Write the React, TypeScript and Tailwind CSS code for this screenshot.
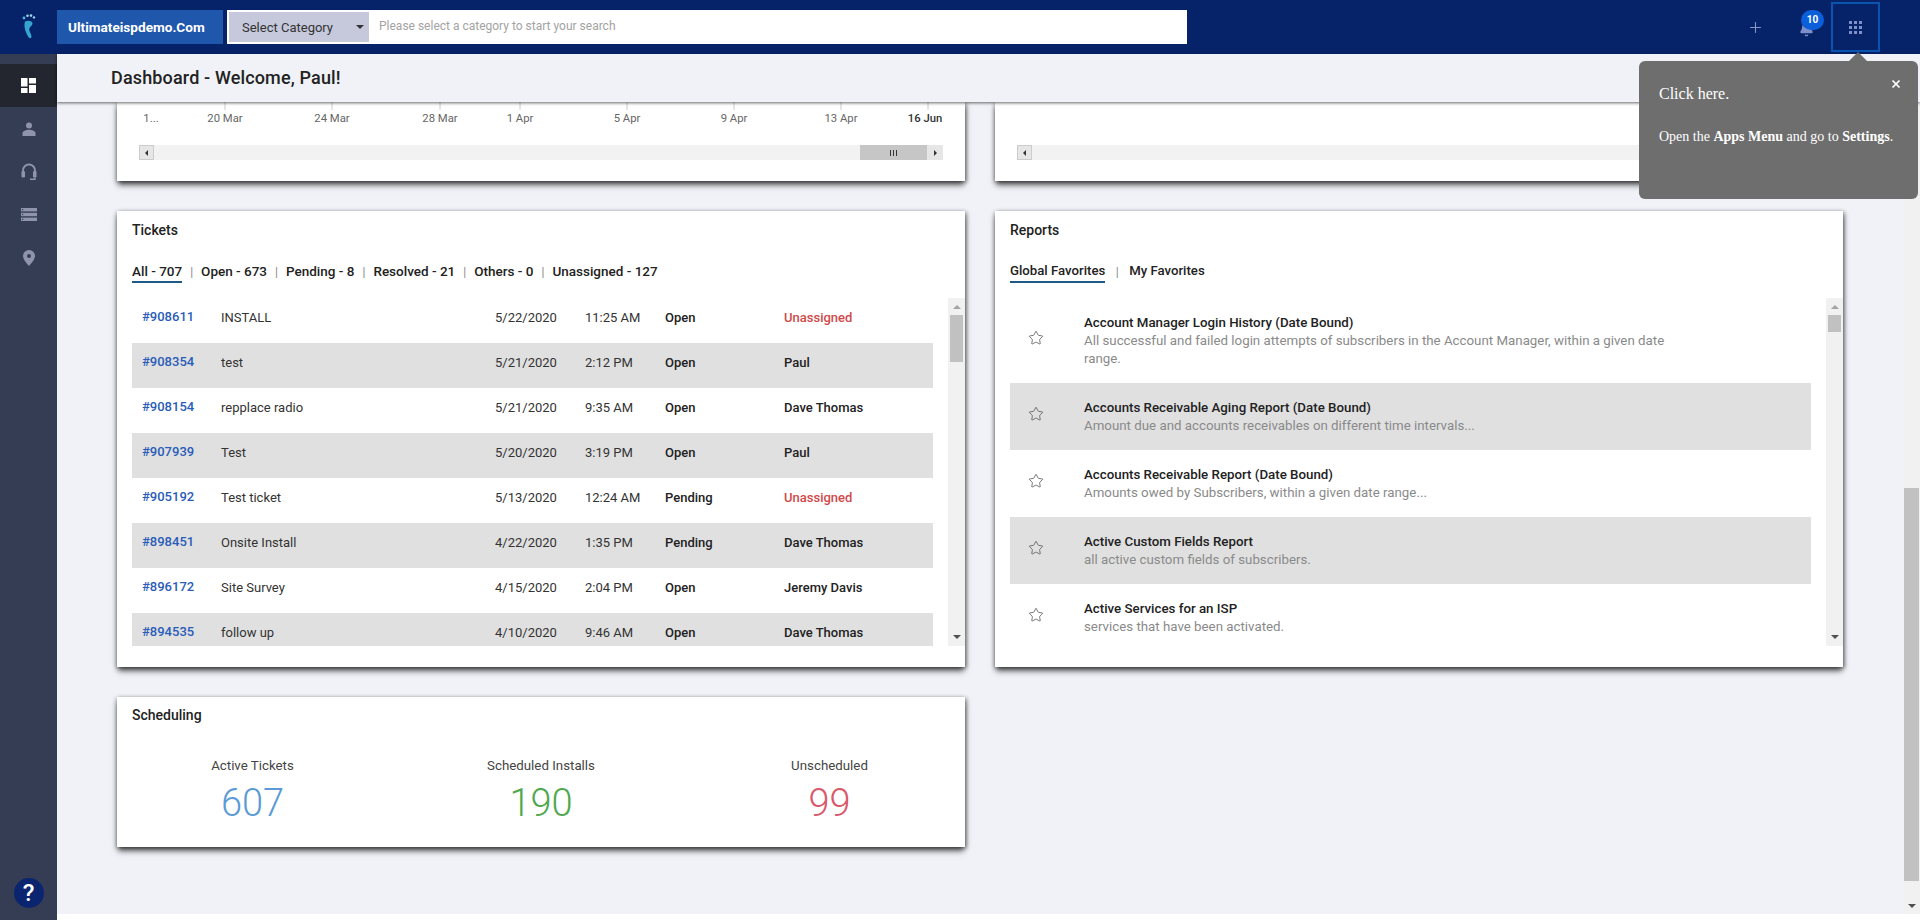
import React from "react";
import { Plus, Bell, Star, X } from "lucide-react";

const tickets = [
  { id: "#908611", subject: "INSTALL", date: "5/22/2020", time: "11:25 AM", status: "Open", owner: "Unassigned" },
  { id: "#908354", subject: "test", date: "5/21/2020", time: "2:12 PM", status: "Open", owner: "Paul" },
  { id: "#908154", subject: "repplace radio", date: "5/21/2020", time: "9:35 AM", status: "Open", owner: "Dave Thomas" },
  { id: "#907939", subject: "Test", date: "5/20/2020", time: "3:19 PM", status: "Open", owner: "Paul" },
  { id: "#905192", subject: "Test ticket", date: "5/13/2020", time: "12:24 AM", status: "Pending", owner: "Unassigned" },
  { id: "#898451", subject: "Onsite Install", date: "4/22/2020", time: "1:35 PM", status: "Pending", owner: "Dave Thomas" },
  { id: "#896172", subject: "Site Survey", date: "4/15/2020", time: "2:04 PM", status: "Open", owner: "Jeremy Davis" },
  { id: "#894535", subject: "follow up", date: "4/10/2020", time: "9:46 AM", status: "Open", owner: "Dave Thomas" },
];

const reports = [
  {
    title: "Account Manager Login History (Date Bound)",
    desc: "All successful and failed login attempts of subscribers in the Account Manager, within a given date range.",
  },
  {
    title: "Accounts Receivable Aging Report (Date Bound)",
    desc: "Amount due and accounts receivables on different time intervals...",
  },
  {
    title: "Accounts Receivable Report (Date Bound)",
    desc: "Amounts owed by Subscribers, within a given date range...",
  },
  { title: "Active Custom Fields Report", desc: "all active custom fields of subscribers." },
  { title: "Active Services for an ISP", desc: "services that have been activated." },
];

const axis = [
  { x: 34, label: "1...", tick: false },
  { x: 108, label: "20 Mar", tick: true },
  { x: 215, label: "24 Mar", tick: true },
  { x: 323, label: "28 Mar", tick: true },
  { x: 403, label: "1 Apr", tick: true },
  { x: 510, label: "5 Apr", tick: true },
  { x: 617, label: "9 Apr", tick: true },
  { x: 724, label: "13 Apr", tick: true },
];

const cardClass = "bg-white shadow-[0_5px_6px_-1px_rgba(0,0,0,0.6),-1px_1px_4px_0_rgba(0,0,0,0.25),2px_1px_4px_0_rgba(0,0,0,0.35)]";

function Logo() {
  return (
    <svg width="16" height="26" viewBox="0 0 16 26" className="shrink-0">
      <circle cx="3" cy="4" r="1.4" fill="#4fb6dc" />
      <circle cx="6.5" cy="1.8" r="1.3" fill="#9fd6ea" />
      <circle cx="10" cy="1.6" r="1.3" fill="#9fd6ea" />
      <circle cx="13" cy="3.4" r="1.2" fill="#9fd6ea" />
      <path
        d="M4 7.5c3-1.5 7.5-1 7.5 2 0 2.200-3.200 3.300-3.200 6 0 2.500 2.200 4.500 2.200 7 0 1.800-1.700 2.500-2.800 1C6 21 2 13 4 7.500Z"
        fill="#35a4d0"
      />
    </svg>
  );
}

function DashIcon() {
  return (
    <svg width="15" height="15" viewBox="0 0 15 15" fill="#fff">
      <rect x="0" y="0" width="6.500" height="8.500" />
      <rect x="8" y="0" width="7" height="5.500" />
      <rect x="8" y="7" width="7" height="8" />
      <rect x="0" y="10" width="6.500" height="5" />
    </svg>
  );
}

function UserIcon() {
  return (
    <svg width="14" height="14" viewBox="0 0 14 14" fill="#8f93ab">
      <circle cx="7" cy="3.500" r="3" />
      <path d="M0.500 14v-2.500C0.500 9 4 7.800 7 7.800s6.500 1.200 6.500 3.700V14Z" />
    </svg>
  );
}

function HeadsetIcon() {
  return (
    <svg width="16" height="18" viewBox="0 0 16 18" fill="none">
      <path d="M2 10V7.500a6 6 0 0 1 12 0V10" stroke="#8f93ab" strokeWidth="1.800" />
      <rect x="0.500" y="8" width="3.500" height="6.500" rx="1.200" fill="#8f93ab" />
      <rect x="12" y="8" width="3.500" height="6.500" rx="1.200" fill="#8f93ab" />
      <path d="M14 14.500v1.800H9" stroke="#8f93ab" strokeWidth="1.400" />
    </svg>
  );
}

function ListIcon() {
  return (
    <svg width="16" height="13" viewBox="0 0 16 13" fill="#8f93ab">
      <rect x="0" y="0" width="16" height="3.400" />
      <rect x="0" y="4.800" width="16" height="3.400" />
      <rect x="0" y="9.600" width="16" height="3.400" />
      <rect x="1" y="1" width="1.200" height="1.200" fill="#353d54" />
      <rect x="1" y="5.900" width="1.200" height="1.200" fill="#353d54" />
      <rect x="1" y="10.700" width="1.200" height="1.200" fill="#353d54" />
    </svg>
  );
}

function PinIcon() {
  return (
    <svg width="12" height="16" viewBox="0 0 12 16">
      <path d="M6 0a6 6 0 0 1 6 6c0 3.500-4 7.500-6 10C4 13.500 0 9.500 0 6a6 6 0 0 1 6-6Z" fill="#8f93ab" />
      <circle cx="6" cy="6" r="2" fill="#353d54" />
    </svg>
  );
}

function Sidebar() {
  const items = [<UserIcon />, <HeadsetIcon />, <ListIcon />, <PinIcon />];
  return (
    <aside className="w-[57px] shrink-0 bg-[#353d54] pt-[10px] flex flex-col">
      <div className="h-[43px] bg-[#24262f] flex items-center justify-center">
        <DashIcon />
      </div>
      {items.map((icon, i) => (
        <div key={i} className="h-[43px] flex items-center justify-center">
          {icon}
        </div>
      ))}
      <div className="mt-auto mb-[12px] flex justify-center">
        <div className="w-[30px] h-[30px] rounded-full bg-[#0b2470] text-white text-[24px] leading-[30px] text-center font-medium">
          ?
        </div>
      </div>
    </aside>
  );
}

function Header() {
  return (
    <header className="h-[54px] shrink-0 bg-[#06236a] flex items-center relative">
      <div className="w-[57px] flex justify-center">
        <Logo />
      </div>
      <div className="w-[166px] h-[34px] bg-[#1f57ad] text-white text-[13.6px] font-bold flex items-center pl-[11px]">
        Ultimateispdemo.Com
      </div>
      <div className="ml-[4px] w-[960px] h-[34px] bg-white flex items-center">
        <div className="ml-[2px] w-[140px] h-[30px] bg-[#c6c8dc] flex items-center justify-between pl-[13px] pr-[5px] text-[13px] text-[#333]">
          <span className="mt-px">Select Category</span>
          <span className="w-0 h-0 border-x-[4px] border-x-transparent border-t-[4px] border-t-[#333]" />
        </div>
        <span className="ml-[10px] -mt-[3px] text-[12px] text-[#a3a3a3]">Please select a category to start your search</span>
      </div>
      <div className="ml-auto flex items-center">
        <Plus size={17} strokeWidth={1.5} className="text-[#8a97c8] mr-[35px]" />
        <div className="relative w-[14px] h-[16px] mr-[18px] mt-[6px]">
          <Bell size={15} fill="#7f8fc9" className="text-[#7f8fc9]" />
          <span className="absolute -top-[12px] left-[2px] w-[23px] h-[20px] rounded-full bg-[#0b5fd8] text-white text-[10px] font-bold leading-[20px] text-center">
            10
          </span>
        </div>
        <div className="w-[49px] h-[50px] border-2 border-[#0a54b0] flex items-center justify-center mr-[40px]">
          <div className="grid grid-cols-3 gap-[2px]">
            {Array.from({ length: 9 }).map((_, i) => (
              <span key={i} className="w-[3px] h-[3px] bg-[#7f8fc9]" />
            ))}
          </div>
        </div>
      </div>
    </header>
  );
}

function ChartScroll({ showThumb }: { showThumb: boolean }) {
  return (
    <div className="mx-[22px] h-[15px] bg-[#f2f2f2] flex justify-between">
      <div className="w-[15px] bg-[#e6e6e6] border border-[#cccccc] flex items-center justify-center">
        <span className="w-0 h-0 border-y-[3px] border-y-transparent border-r-[3px] border-r-[#333]" />
      </div>
      {showThumb && (
        <div className="flex">
          <div className="w-[67px] bg-[#c6c6c6] flex items-center justify-center gap-[2px]">
            <span className="w-px h-[6px] bg-[#333]" />
            <span className="w-px h-[6px] bg-[#333]" />
            <span className="w-px h-[6px] bg-[#333]" />
          </div>
          <div className="w-[16px] bg-[#e6e6e6] flex items-center justify-center">
            <span className="w-0 h-0 border-y-[3px] border-y-transparent border-l-[3px] border-l-[#333]" />
          </div>
        </div>
      )}
    </div>
  );
}

function ChartCard({ withAxis }: { withAxis: boolean }) {
  return (
    <section className={`${cardClass} h-[79px]`}>
      <div className="h-[43px]">
        {withAxis && (
          <svg width="848" height="43" className="block" fontFamily="Roboto, sans-serif" fontSize="11.3">
            {axis.map((a) => (
              <g key={a.label}>
                {a.tick && <line x1={a.x} x2={a.x} y1="0" y2="8" stroke="#cccccc" />}
                <text x={a.x} y="20" textAnchor="middle" fill="#666666">
                  {a.label}
                </text>
              </g>
            ))}
            <line x1="811" x2="811" y1="0" y2="8" stroke="#cccccc" />
            <text x="808" y="20" textAnchor="middle" fill="#333333" fontWeight="500">
              16 Jun
            </text>
          </svg>
        )}
      </div>
      <ChartScroll showThumb={withAxis} />
    </section>
  );
}

function Tabs({ items, sepClass, sizeClass }: { items: string[]; sepClass: string; sizeClass: string }) {
  return (
    <div className={`flex items-start h-[24px] ${sizeClass} font-medium text-[#222] leading-[16px]`}>
      {items.map((t, i) => (
        <React.Fragment key={t}>
          {i > 0 && <span className={`${sepClass} mt-[1px] font-normal text-[12px] text-[#888]`}>|</span>}
          <span className={i === 0 ? "border-b-2 border-[#1e5a85] pb-[2px] h-[20px]" : ""}>{t}</span>
        </React.Fragment>
      ))}
    </div>
  );
}

function ListScrollbar({ thumb }: { thumb: string }) {
  return (
    <div className="w-[17px] h-full bg-[#f1f1f1] flex flex-col items-center shrink-0">
      <span className="mt-[7px] w-0 h-0 border-x-[4px] border-x-transparent border-b-[4px] border-b-[#a3a3a3]" />
      <span className={`mt-[6px] w-[13px] bg-[#c1c1c1] ${thumb}`} />
      <span className="mt-auto mb-[7px] w-0 h-0 border-x-[4px] border-x-transparent border-t-[4px] border-t-[#505050]" />
    </div>
  );
}

function TicketsCard() {
  return (
    <section className={`${cardClass} h-[456px] flex flex-col`}>
      <h2 className="pl-[15px] pt-[10px] h-[50px] text-[14px] font-medium leading-[18px] text-[#222]">Tickets</h2>
      <div className="pl-[15px] h-[37px] pt-[2px]">
        <Tabs
          sepClass="px-[8px]"
          sizeClass="text-[13.5px]"
          items={["All - 707", "Open - 673", "Pending - 8", "Resolved - 21", "Others - 0", "Unassigned - 127"]}
        />
      </div>
      <div className="h-[348px] flex">
        <div className="ml-[15px] w-[801px] overflow-hidden">
          {tickets.map((t, i) => (
            <div
              key={t.id}
              className={`h-[45px] pb-[6px] shrink-0 flex items-center text-[13px] text-[#333] ${i % 2 ? "bg-[#e0e0e0]" : ""}`}
            >
              <span className="w-[89px] pl-[10px] -mt-[1px] font-medium text-[#2a5cb8]">{t.id}</span>
              <span className="w-[274px]">{t.subject}</span>
              <span className="w-[90px]">{t.date}</span>
              <span className="w-[80px]">{t.time}</span>
              <span className="w-[119px] font-medium text-[#222]">{t.status}</span>
              <span className={`font-medium ${t.owner === "Unassigned" ? "text-[#d0494a]" : "text-[#222]"}`}>{t.owner}</span>
            </div>
          ))}
        </div>
        <div className="ml-auto">
          <ListScrollbar thumb="h-[47px]" />
        </div>
      </div>
    </section>
  );
}

function ReportsCard() {
  return (
    <section className={`${cardClass} h-[456px] flex flex-col`}>
      <h2 className="pl-[15px] pt-[10px] h-[50px] text-[14px] font-medium leading-[18px] text-[#222]">Reports</h2>
      <div className="pl-[15px] h-[37px] pt-[2px]">
        <Tabs sepClass="px-[10.5px]" sizeClass="text-[13.2px]" items={["Global Favorites", "My Favorites"]} />
      </div>
      <div className="h-[348px] flex">
        <div className="ml-[15px] w-[801px] overflow-hidden">
          {reports.map((r, i) => (
            <div
              key={r.title}
              className={`flex items-center shrink-0 ${i === 0 ? "h-[85px]" : "h-[67px]"} ${i % 2 ? "bg-[#e0e0e0]" : ""}`}
            >
              <div className="w-[74px] pl-[18px] pb-[6px] shrink-0">
                <Star size={16} strokeWidth={1.2} className="text-[#555]" />
              </div>
              <div className="w-[600px] text-[13.3px] leading-[18px]">
                <div className="font-medium text-[#222]">{r.title}</div>
                <div className="text-[#8a8a8a]">{r.desc}</div>
              </div>
            </div>
          ))}
        </div>
        <div className="ml-auto">
          <ListScrollbar thumb="h-[17px]" />
        </div>
      </div>
    </section>
  );
}

function SchedulingCard() {
  const stats = [
    { label: "Active Tickets", value: "607", color: "text-[#5b9bd5]" },
    { label: "Scheduled Installs", value: "190", color: "text-[#4fa84f]" },
    { label: "Unscheduled", value: "99", color: "text-[#d9586a]" },
  ];
  return (
    <section className={`${cardClass} h-[150px]`}>
      <h2 className="pl-[15px] pt-[9px] h-[60px] text-[14px] font-medium leading-[18px] text-[#222]">Scheduling</h2>
      <div className="flex justify-center gap-[88.5px]">
        {stats.map((s) => (
          <div key={s.label} className="w-[200px] text-center">
            <div className="text-[13.3px] leading-[18px] text-[#444]">{s.label}</div>
            <div className={`mt-[6px] text-[38px] font-light leading-[44px] ${s.color}`}>{s.value}</div>
          </div>
        ))}
      </div>
    </section>
  );
}

function PageScrollbar() {
  return (
    <div className="w-[17px] shrink-0 bg-[#f1f1f1] flex flex-col items-center h-[812px]">
      <div className="mt-[386px] w-[15px] h-[393px] bg-[#c1c1c1]" />
      <span className="mt-auto mb-[6px] w-0 h-0 border-x-[4px] border-x-transparent border-t-[4px] border-t-[#505050]" />
    </div>
  );
}

function Tour() {
  return (
    <div className="absolute left-[1639px] top-[61px] w-[279px] h-[138px] rounded-[6px] bg-[#6e6e6e] text-white z-20 [font-family:Liberation_Serif,serif] text-[14px]">
      <span className="absolute -top-[9px] left-[210px] w-0 h-0 border-x-[9px] border-x-transparent border-b-[9px] border-b-[#6e6e6e]" />
      <X size={12} strokeWidth={3.5} className="absolute right-[16px] top-[17px]" />
      <p className="pl-[20px] pt-[24px] leading-[18px] text-[16px]">Click here.</p>
      <p className="pl-[20px] pt-[25px] leading-[18px] whitespace-nowrap">
        Open the <b>Apps Menu</b> and go to <b>Settings</b>.
      </p>
    </div>
  );
}

export default function App() {
  return (
    <div className="relative w-[1920px] h-[920px] overflow-hidden flex flex-col bg-white [font-family:Roboto,sans-serif]">
      <Header />
      <div className="flex flex-1 min-h-0">
        <Sidebar />
        <div className="flex-1 flex flex-col min-w-0">
          <div className="h-[48px] shrink-0 bg-[#f0f2f7] flex items-center pl-[54px] pb-[2px] text-[18px] tracking-[0.15px] font-medium text-[#222] shadow-[0_1px_3px_rgba(0,0,0,0.6)] relative z-10">
            Dashboard - Welcome, Paul!
          </div>
          <div className="flex-1 flex items-start min-h-0">
            <main className="flex-1 h-[812px] bg-[#f0f2f7] px-[60px] overflow-hidden">
              <div className="grid grid-cols-2 gap-x-[30px] gap-y-[30px]">
                <ChartCard withAxis />
                <ChartCard withAxis={false} />
                <TicketsCard />
                <ReportsCard />
                <SchedulingCard />
              </div>
            </main>
            <PageScrollbar />
          </div>
        </div>
      </div>
      <Tour />
    </div>
  );
}
